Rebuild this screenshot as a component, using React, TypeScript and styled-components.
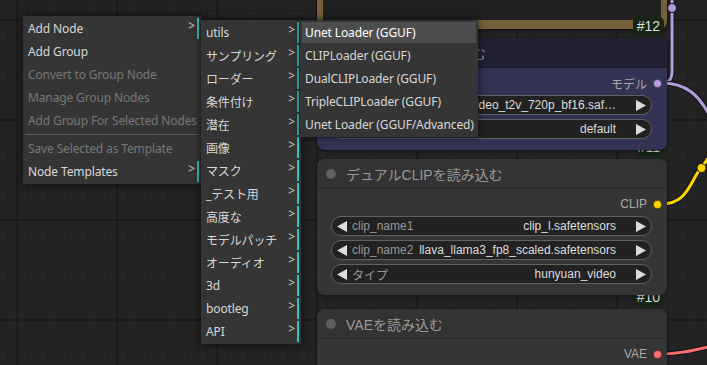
import styled, { createGlobalStyle, css } from 'styled-components';

const GlobalStyle = createGlobalStyle`
  html, body {
    margin: 0;
    padding: 0;
    background: #232323;
    overflow: hidden;
  }
`;

const Canvas = styled.div`
  position: relative;
  width: 707px;
  height: 365px;
  overflow: hidden;
  background-color: #242424;
  background-image:
    linear-gradient(to right, #1b1b1b 2px, transparent 2px),
    linear-gradient(to bottom, #1b1b1b 2px, transparent 2px),
    linear-gradient(to right, #1f1f1f 1px, transparent 1px),
    linear-gradient(to bottom, #1f1f1f 1px, transparent 1px);
  background-size: 100px 100px, 100px 100px, 10px 10px, 10px 10px;
  background-position: 16px 0, 0 19px, 7px 0, 0 0;
`;

const LinkLayer = styled.svg`
  position: absolute;
  left: 0;
  top: 0;
`;

/* ---- nodes ---- */

const NoteNode = styled.div`
  position: absolute;
  left: 317px;
  top: -60px;
  width: 350px;
  height: 89px;
  box-sizing: border-box;
  display: flex;
  padding: 0 6px 9px;
  background: #76623a;
  border-radius: 0 0 8px 8px;
  box-shadow: 0 1px 4px rgba(0, 0, 0, 0.5);
`;

const NoteText = styled.div`
  flex: 1;
  background: #212121;
`;

const Node = styled.div<{ $x: number; $y: number; $bg: string }>`
  position: absolute;
  left: ${(p) => p.$x}px;
  top: ${(p) => p.$y}px;
  width: 350px;
  background: ${(p) => p.$bg};
  border-radius: 8px;
  box-shadow: 0 1px 4px rgba(0, 0, 0, 0.45);
  font-family: 'Liberation Sans', 'Noto Sans CJK JP', sans-serif;
`;

const Badge = styled.div`
  position: absolute;
  right: 3px;
  top: -21px;
  height: 19px;
  padding: 0 4px;
  border-radius: 5px;
  background: #162616;
  color: #ddd;
  font-size: 14px;
  line-height: 19px;
`;

const Title = styled.div<{ $bg: string }>`
  height: 30px;
  box-sizing: border-box;
  display: flex;
  align-items: center;
  gap: 10px;
  padding-left: 9px;
  background: ${(p) => p.$bg};
  border-radius: 8px 8px 0 0;
  border-bottom: 1px solid rgba(0, 0, 0, 0.18);
  color: #999;
  font-size: 14px;
  white-space: nowrap;
`;

const TitleDot = styled.span`
  width: 10px;
  height: 10px;
  border-radius: 50%;
  background: #5f5f5f;
`;

const Body = styled.div`
  display: flex;
  flex-direction: column;
  gap: 4px;
  padding: 5px 15px 11px 14px;
`;

const OutputRow = styled.div`
  height: 20px;
  margin-bottom: -2px;
  display: flex;
  align-items: center;
  justify-content: flex-end;
  gap: 6px;
  color: #aaa;
  font-size: 12px;
`;

const SlotDot = styled.span<{ $color: string }>`
  width: 9px;
  height: 9px;
  box-sizing: border-box;
  margin-right: -10px;
  border-radius: 50%;
  border: 1px solid rgba(0, 0, 0, 0.55);
  background: ${(p) => p.$color};
`;

const Widget = styled.div`
  height: 20px;
  box-sizing: border-box;
  display: flex;
  align-items: center;
  gap: 5px;
  padding: 0 5px;
  border: 1px solid #616161;
  border-radius: 10px;
  background: #222;
  font-size: 12px;
  white-space: nowrap;
`;

const WLabel = styled.span`
  color: #999;
`;

const WValue = styled.span`
  margin-left: auto;
  margin-right: 15px;
  color: #ddd;
`;

const Arrow = ({ left }: { left?: boolean }) => (
  <svg width="10" height="11" viewBox="0 0 10 11">
    <polygon points={left ? '10,0 0,5.5 10,11' : '0,0 10,5.5 0,11'} fill="#ddd" />
  </svg>
);

/* ---- context menus ---- */

const Menu = styled.div<{ $x: number; $y: number; $w: number }>`
  position: absolute;
  left: ${(p) => p.$x}px;
  top: ${(p) => p.$y}px;
  width: ${(p) => p.$w}px;
  box-sizing: border-box;
  display: flex;
  flex-direction: column;
  padding: 1px 2px;
  background: #353535;
  box-shadow: 0 0 8px rgba(0, 0, 0, 0.7);
  font-family: 'Noto Sans', 'Noto Sans CJK JP', sans-serif;
  font-size: 12px;
  letter-spacing: -0.13px;
`;

const Entry = styled.div<{ $disabled?: boolean; $sub?: boolean; $active?: boolean }>`
  position: relative;
  height: 21px;
  margin: 1px 0;
  padding: 0 3px;
  display: flex;
  align-items: center;
  white-space: nowrap;
  color: ${(p) => (p.$disabled ? '#777' : p.$active ? '#fff' : '#d8d8d8')};
  background: ${(p) => (p.$active ? '#4d4d4d' : 'transparent')};
  border-right: 2px solid ${(p) => (p.$sub ? '#2ec4c4' : 'transparent')};
  ${(p) =>
    p.$sub &&
    css`
      &::after {
        content: '>';
        position: absolute;
        top: 1px;
        right: 2px;
        line-height: 14px;
        color: #ccc;
      }
    `}
`;

const Separator = styled.div`
  height: 1px;
  margin: 2px 0;
  background: #5c5c5c;
`;

type Item = { label: string; sub?: boolean; disabled?: boolean; active?: boolean } | 'sep';

const mainMenu: Item[] = [
  { label: 'Add Node', sub: true },
  { label: 'Add Group' },
  { label: 'Convert to Group Node', disabled: true },
  { label: 'Manage Group Nodes', disabled: true },
  { label: 'Add Group For Selected Nodes', disabled: true },
  'sep',
  { label: 'Save Selected as Template', disabled: true },
  { label: 'Node Templates', sub: true },
];

const categoryMenu: Item[] = [
  'utils',
  'サンプリング',
  'ローダー',
  '条件付け',
  '潜在',
  '画像',
  'マスク',
  '_テスト用',
  '高度な',
  'モデルパッチ',
  'オーディオ',
  '3d',
  'bootleg',
  'API',
].map((label) => ({ label, sub: true }));

const ggufMenu: Item[] = [
  { label: 'Unet Loader (GGUF)', active: true },
  { label: 'CLIPLoader (GGUF)' },
  { label: 'DualCLIPLoader (GGUF)' },
  { label: 'TripleCLIPLoader (GGUF)' },
  { label: 'Unet Loader (GGUF/Advanced)' },
];

function ContextMenu({ x, y, w, items }: { x: number; y: number; w: number; items: Item[] }) {
  return (
    <Menu $x={x} $y={y} $w={w}>
      {items.map((it, i) =>
        it === 'sep' ? (
          <Separator key={i} />
        ) : (
          <Entry key={i} $sub={it.sub} $disabled={it.disabled} $active={it.active}>
            {it.label}
          </Entry>
        )
      )}
    </Menu>
  );
}

function Combo({ label, value }: { label: string; value: string }) {
  return (
    <Widget>
      <Arrow left />
      <WLabel>{label}</WLabel>
      <WValue>{value}</WValue>
      <Arrow />
    </Widget>
  );
}

const links = [
  { color: '#b39ddb', d: 'M 661 83 C 669 83, 672 80, 672 70 L 672 -10' },
  { color: '#b39ddb', d: 'M 661 83 C 686 83, 699 94, 712 120' },
  { color: '#ffd500', d: 'M 661 204 C 688 204, 690 181, 701 168 S 712 150, 718 138' },
  { color: '#ff6e6e', d: 'M 661 354 C 680 354, 695 350, 712 346' },
];

export default function App() {
  return (
    <>
      <GlobalStyle />
      <Canvas>
        <LinkLayer width={707} height={365}>
          {links.map((l, i) => (
            <g key={i} fill="none" strokeLinecap="round">
              <path d={l.d} stroke="#141414" strokeWidth={5} />
              <path d={l.d} stroke={l.color} strokeWidth={3} />
            </g>
          ))}
          <circle cx={672} cy={8} r={4.5} fill="#b39ddb" stroke="#141414" strokeWidth={1} />
          <circle cx={701.5} cy={168} r={4.5} fill="#ffd500" stroke="#141414" strokeWidth={1} />
        </LinkLayer>

        <NoteNode>
          <NoteText />
        </NoteNode>

        <Node $x={317} $y={309} $bg="#353535">
          <Badge>#10</Badge>
          <Title $bg="#333">
            <TitleDot />
            VAEを読み込む
          </Title>
          <Body>
            <OutputRow>
              VAE
              <SlotDot $color="#ff6e6e" />
            </OutputRow>
          </Body>
        </Node>

        <Node $x={317} $y={159} $bg="#353535">
          <Badge>#11</Badge>
          <Title $bg="#333">
            <TitleDot />
            デュアルCLIPを読み込む
          </Title>
          <Body>
            <OutputRow>
              CLIP
              <SlotDot $color="#ffd500" />
            </OutputRow>
            <Combo label="clip_name1" value="clip_l.safetensors" />
            <Combo label="clip_name2" value="llava_llama3_fp8_scaled.safetensors" />
            <Combo label="タイプ" value="hunyuan_video" />
          </Body>
        </Node>

        <Node $x={317} $y={38} $bg="#333355">
          <Badge>#12</Badge>
          <Title $bg="#222233">
            <TitleDot />
            拡散モデルを読み込む
          </Title>
          <Body>
            <OutputRow>
              モデル
              <SlotDot $color="#b39ddb" />
            </OutputRow>
            <Combo label="unet_name" value="hunyuan_video_t2v_720p_bf16.saf…" />
            <Combo label="weight_dtype" value="default" />
          </Body>
        </Node>

        <ContextMenu x={23} y={16} w={178} items={mainMenu} />
        <ContextMenu x={201} y={20} w={100} items={categoryMenu} />
        <ContextMenu x={300} y={20} w={178} items={ggufMenu} />
      </Canvas>
    </>
  );
}
